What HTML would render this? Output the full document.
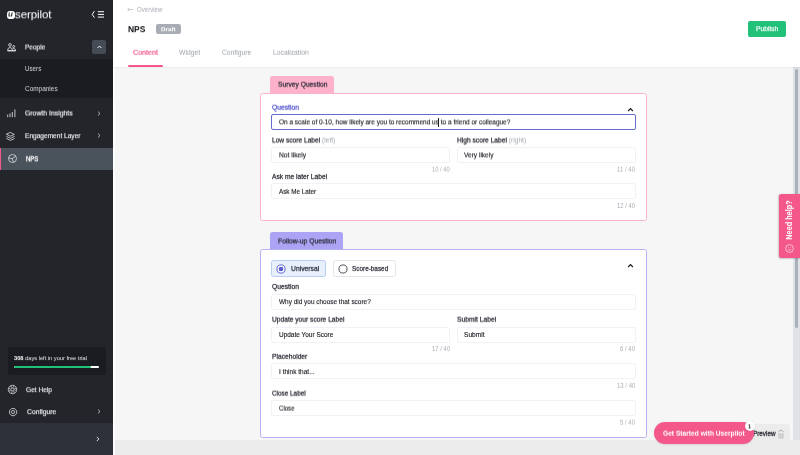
<!DOCTYPE html>
<html lang="en">
<head>
<meta charset="utf-8">
<title>NPS - Userpilot</title>
<style>
*{box-sizing:border-box;margin:0;padding:0}
html,body{width:800px;height:455px;overflow:hidden;background:#f6f6f6;font-family:"Liberation Sans",sans-serif;color:#2b2d38}
#app{position:absolute;left:0;top:0;width:800px;height:455px;overflow:hidden;will-change:transform}
.s{display:inline-block;transform-origin:0 50%}
.t{position:absolute;white-space:nowrap;line-height:10px;height:10px;transform-origin:0 50%}
/* sidebar */
#side{position:absolute;left:0;top:0;width:113px;height:455px;background:#23252b;color:#fff}
#side .sub{position:absolute;left:0;top:59px;width:113px;height:39px;background:#1a1c22}
#side .act{position:absolute;left:0;top:148px;width:113px;height:22px;background:#4a525b;border-left:1.3px solid #f4578a}
#side .bot{position:absolute;left:0;top:423px;width:113px;height:32px;background:#2d323a}
#side .trial{position:absolute;left:7.5px;top:346.5px;width:98px;height:28px;background:#1a1c22;border-radius:2.5px}
#side .chev{position:absolute;left:92px;top:40px;width:14px;height:14px;background:#464c55;border-radius:2px}
.nav{margin-top:0.5px;font-size:7.3px;font-weight:normal;-webkit-text-stroke:0.17px currentColor;color:#e9eaed}
.navs{margin-top:0.45px;font-size:7.2px;color:#d4d6da}
svg{position:absolute;overflow:visible}
/* header */
#head{position:absolute;left:113px;top:0;width:687px;height:67px;background:#fff;box-shadow:0 0.5px 1.5px rgba(0,0,0,.12)}
.tab{font-size:7.3px;color:#9a9fa8}
/* cards */
.card{position:absolute;left:260px;width:387px;background:#fff;border-radius:2.5px;border:1px solid}
.ctab{position:absolute;left:270px;height:17px;border-radius:2.5px 2.5px 0 0}
.inp{position:absolute;height:16px;border:1px solid #f1f2f6;border-radius:2px;background:#fff}
.lbl{margin-top:0.2px;font-size:7.3px;color:#292b34;font-weight:normal;-webkit-text-stroke:0.25px currentColor}
.lbl i{font-style:normal;font-weight:normal;color:#a3a8b0;-webkit-text-stroke:0}
.val{margin-top:0.4px;font-size:7px;color:#17181f;-webkit-text-stroke:0.12px currentColor}
.cnt{margin-top:0.5px;font-size:6.3px;color:#a9aeb5;text-align:right}
/*FIT*/
#logo-u{top:9px!important;margin-top:0!important;transform:translate3d(0,0.50px,0) rotate(0.0001deg)}#logo-u .s{transform:scaleX(1.000)}
#logo{top:9px!important;margin-top:0!important;transform:translate3d(0,0.30px,0) rotate(0.0001deg)}#logo .s{transform:scaleX(1.022)}
#n-people{top:42px!important;margin-top:0!important;transform:translate3d(0,0.50px,0) rotate(0.0001deg)}#n-people .s{transform:scaleX(0.893)}
#n-users{top:63px!important;margin-top:0!important;transform:translate3d(0,0.95px,0) rotate(0.0001deg)}#n-users .s{transform:scaleX(0.868)}
#n-comp{top:84px!important;margin-top:0!important;transform:translate3d(0,0.05px,0) rotate(0.0001deg)}#n-comp .s{transform:scaleX(0.897)}
#n-growth{top:108px!important;margin-top:0!important;transform:translate3d(0,0.50px,0) rotate(0.0001deg)}#n-growth .s{transform:scaleX(0.939)}
#n-eng{top:131px!important;margin-top:0!important;transform:translate3d(0,0.20px,0) rotate(0.0001deg)}#n-eng .s{transform:scaleX(0.900)}
#n-nps{top:154px!important;margin-top:0!important;transform:translate3d(0,0.30px,0) rotate(0.0001deg)}#n-nps .s{transform:scaleX(0.826)}
#trial{top:353px!important;margin-top:0!important;transform:translate3d(0,0.10px,0) rotate(0.0001deg)}#trial .s{transform:scaleX(0.919)}
#n-help{top:385px!important;margin-top:0!important;transform:translate3d(0,0.20px,0) rotate(0.0001deg)}#n-help .s{transform:scaleX(0.903)}
#n-conf{top:407px!important;margin-top:0!important;transform:translate3d(0,0.20px,0) rotate(0.0001deg)}#n-conf .s{transform:scaleX(0.926)}
#h-over{top:4px!important;margin-top:0!important;transform:translate3d(0,0.90px,0) rotate(0.0001deg)}#h-over .s{transform:scaleX(0.964)}
#h-nps{top:24px!important;margin-top:0!important;transform:translate3d(0,0.20px,0) rotate(0.0001deg)}#h-nps .s{transform:scaleX(1.010)}
#h-draft{top:24px!important;margin-top:0!important;transform:translate3d(0,0.20px,0) rotate(0.0001deg)}#h-draft .s{transform:scaleX(1.042)}
#tb1{top:47px!important;margin-top:0!important;transform:translate3d(0,0.80px,0) rotate(0.0001deg)}#tb1 .s{transform:scaleX(0.978)}
#tb2{top:47px!important;margin-top:0!important;transform:translate3d(0,0.80px,0) rotate(0.0001deg)}#tb2 .s{transform:scaleX(0.933)}
#tb3{top:47px!important;margin-top:0!important;transform:translate3d(0,0.80px,0) rotate(0.0001deg)}#tb3 .s{transform:scaleX(0.923)}
#tb4{top:47px!important;margin-top:0!important;transform:translate3d(0,0.80px,0) rotate(0.0001deg)}#tb4 .s{transform:scaleX(0.929)}
#h-pub{top:24px!important;margin-top:0!important;transform:translate3d(0,0.20px,0) rotate(0.0001deg)}#h-pub .s{transform:scaleX(0.942)}
#c1t{top:79px!important;margin-top:0!important;transform:translate3d(0,0.70px,0) rotate(0.0001deg)}#c1t .s{transform:scaleX(0.917)}
#c1q{top:102px!important;margin-top:0!important;transform:translate3d(0,0.70px,0) rotate(0.0001deg)}#c1q .s{transform:scaleX(0.924)}
#c1qv{top:117px!important;margin-top:0!important;transform:translate3d(0,0.40px,0) rotate(0.0001deg)}#c1qv .s{transform:scaleX(0.926)}
#c1l1{top:135px!important;margin-top:0!important;transform:translate3d(0,0.50px,0) rotate(0.0001deg)}#c1l1 .s{transform:scaleX(0.907)}
#c1l2{top:135px!important;margin-top:0!important;transform:translate3d(0,0.50px,0) rotate(0.0001deg)}#c1l2 .s{transform:scaleX(0.912)}
#c1v1{top:150px!important;margin-top:0!important;transform:translate3d(0,0.40px,0) rotate(0.0001deg)}#c1v1 .s{transform:scaleX(0.950)}
#c1v2{top:150px!important;margin-top:0!important;transform:translate3d(0,0.40px,0) rotate(0.0001deg)}#c1v2 .s{transform:scaleX(0.936)}
#c1c1{top:164px!important;margin-top:0!important;transform:translate3d(0,0.70px,0) rotate(0.0001deg)}#c1c1 .s{transform:scaleX(0.924)}
#c1c2{top:164px!important;margin-top:0!important;transform:translate3d(0,0.70px,0) rotate(0.0001deg)}#c1c2 .s{transform:scaleX(0.958)}
#c1l3{top:171px!important;margin-top:0!important;transform:translate3d(0,0.90px,0) rotate(0.0001deg)}#c1l3 .s{transform:scaleX(0.913)}
#c1v3{top:186px!important;margin-top:0!important;transform:translate3d(0,0.90px,0) rotate(0.0001deg)}#c1v3 .s{transform:scaleX(0.902)}
#c1c3{top:201px!important;margin-top:0!important;transform:translate3d(0,0.00px,0) rotate(0.0001deg)}#c1c3 .s{transform:scaleX(0.934)}
#c2t{top:236px!important;margin-top:0!important;transform:translate3d(0,0.40px,0) rotate(0.0001deg)}#c2t .s{transform:scaleX(0.926)}
#c2r1{top:263px!important;margin-top:0!important;transform:translate3d(0,0.90px,0) rotate(0.0001deg)}#c2r1 .s{transform:scaleX(0.927)}
#c2r2{top:263px!important;margin-top:0!important;transform:translate3d(0,0.90px,0) rotate(0.0001deg)}#c2r2 .s{transform:scaleX(0.875)}
#c2l1{top:281px!important;margin-top:0!important;transform:translate3d(0,0.90px,0) rotate(0.0001deg)}#c2l1 .s{transform:scaleX(0.924)}
#c2v1{top:297px!important;margin-top:0!important;transform:translate3d(0,0.10px,0) rotate(0.0001deg)}#c2v1 .s{transform:scaleX(0.921)}
#c2l2{top:314px!important;margin-top:0!important;transform:translate3d(0,0.70px,0) rotate(0.0001deg)}#c2l2 .s{transform:scaleX(0.911)}
#c2l3{top:314px!important;margin-top:0!important;transform:translate3d(0,0.70px,0) rotate(0.0001deg)}#c2l3 .s{transform:scaleX(0.920)}
#c2v2{top:330px!important;margin-top:0!important;transform:translate3d(0,0.00px,0) rotate(0.0001deg)}#c2v2 .s{transform:scaleX(0.924)}
#c2v3{top:330px!important;margin-top:0!important;transform:translate3d(0,0.00px,0) rotate(0.0001deg)}#c2v3 .s{transform:scaleX(0.941)}
#c2c1{top:344px!important;margin-top:0!important;transform:translate3d(0,0.10px,0) rotate(0.0001deg)}#c2c1 .s{transform:scaleX(0.945)}
#c2c2{top:344px!important;margin-top:0!important;transform:translate3d(0,0.10px,0) rotate(0.0001deg)}#c2c2 .s{transform:scaleX(0.951)}
#c2l4{top:351px!important;margin-top:0!important;transform:translate3d(0,0.80px,0) rotate(0.0001deg)}#c2l4 .s{transform:scaleX(0.916)}
#c2v4{top:367px!important;margin-top:0!important;transform:translate3d(0,0.10px,0) rotate(0.0001deg)}#c2v4 .s{transform:scaleX(0.933)}
#c2c3{top:380px!important;margin-top:0!important;transform:translate3d(0,0.90px,0) rotate(0.0001deg)}#c2c3 .s{transform:scaleX(0.950)}
#c2l5{top:388px!important;margin-top:0!important;transform:translate3d(0,0.60px,0) rotate(0.0001deg)}#c2l5 .s{transform:scaleX(0.874)}
#c2v5{top:403px!important;margin-top:0!important;transform:translate3d(0,0.60px,0) rotate(0.0001deg)}#c2v5 .s{transform:scaleX(0.866)}
#c2c4{top:417px!important;margin-top:0!important;transform:translate3d(0,0.70px,0) rotate(0.0001deg)}#c2c4 .s{transform:scaleX(0.951)}
#prev{top:428px!important;margin-top:0!important;transform:translate3d(0,0.90px,0) rotate(0.0001deg)}#prev .s{transform:scaleX(0.918)}
#gs{top:428px!important;margin-top:0!important;transform:translate3d(0,0.70px,0) rotate(0.0001deg)}#gs .s{transform:scaleX(0.886)}
#gsb{top:421px!important;margin-top:0!important;transform:translate3d(0,0.40px,0) rotate(0.0001deg)}#gsb .s{transform:scaleX(1.000)}
/*ENDFIT*/
</style>
</head>
<body>
<div id="app">
<!-- main bottom bar + scrollbar -->
<div style="position:absolute;left:113px;top:440.2px;width:687px;height:15px;background:#ececec"></div>
<div style="position:absolute;left:793.3px;top:67px;width:7px;height:373.2px;background:#dfe3e7"></div>
<div style="position:absolute;left:795px;top:68.5px;width:3.3px;height:259px;background:#a9b0b8;border-radius:2px"></div>

<div style="position:absolute;left:113px;top:0;width:2.2px;height:455px;background:#fdfdfd"></div>
<!-- ============ SIDEBAR ============ -->
<div id="side">
  <div class="sub"></div>
  <div class="act"></div>
  <div class="bot"></div>
  <div class="trial"></div>
  <div class="chev"></div>
  <!-- logo -->
  <div style="position:absolute;left:6.8px;top:10.6px;width:7.8px;height:8px;background:#fff;border-radius:2.9px"></div>
  <div class="t" id="logo-u" style="left:8.3px;top:9.5px;font-size:8px;font-weight:bold;font-style:italic;color:#23252b"><span class="s">u</span></div>
  <div class="t" id="logo" style="left:14.6px;top:9.3px;font-size:11.3px;color:#fff;letter-spacing:-0.1px"><span class="s">serpilot</span></div>
  <!-- collapse icon -->
  <svg style="left:91px;top:10px" width="14" height="9" viewBox="0 0 14 9"><path d="M3.4 1.2 L1.2 4.4 L3.4 7.6" fill="none" stroke="#fff" stroke-width="1"/><path d="M6.8 1.7H13 M6.8 4.4H13 M6.8 7.1H13" stroke="#fff" stroke-width="1"/></svg>
  <!-- chevron up in People -->
  <svg style="left:96.5px;top:45.3px" width="5" height="4" viewBox="0 0 5 4"><path d="M0.6 3 L2.5 1 L4.4 3" fill="none" stroke="#fff" stroke-width="0.9"/></svg>
  <!-- People icon -->
  <svg style="left:6.5px;top:42.5px" width="9" height="9" viewBox="0 0 9 9"><g fill="none" stroke="#eceef0" stroke-width="0.8" stroke-linejoin="round"><circle cx="3" cy="1.9" r="1.35"/><path d="M0.6 7.7Q0.6 4.5 3 4.5Q5.4 4.5 5.4 7.7Z"/><circle cx="6.7" cy="3.5" r="1"/><path d="M5.4 7.7H8.6Q8.6 5.5 6.8 5.5Q6 5.5 5.5 6"/><path d="M0.6 7.8H8.6" stroke-width="0.9"/></g></svg>
  <div class="t nav" id="n-people" style="left:24.7px;top:42px"><span class="s">People</span></div>
  <div class="t navs" id="n-users" style="left:24.7px;top:63.5px"><span class="s">Users</span></div>
  <div class="t navs" id="n-comp" style="left:24.7px;top:83.6px"><span class="s">Companies</span></div>
  <!-- growth icon -->
  <svg style="left:6.5px;top:109px" width="9" height="9" viewBox="0 0 9 9"><path d="M0.7 8.2V5.6 M3 8.2V4.4 M5.3 8.2V3 M7.9 8.2V0.4" stroke="#eceef0" stroke-width="0.8" fill="none"/></svg>
  <div class="t nav" id="n-growth" style="left:24.7px;top:108px"><span class="s">Growth Insights</span></div>
  <svg style="left:97px;top:110.5px" width="4" height="5" viewBox="0 0 4 5"><path d="M1 0.6 L3 2.5 L1 4.4" fill="none" stroke="#d6d8dc" stroke-width="0.75"/></svg>
  <!-- layers icon -->
  <svg style="left:6.4px;top:131.5px" width="9" height="9" viewBox="0 0 9 9"><g fill="none" stroke="#eceef0" stroke-width="0.75" stroke-linejoin="round" stroke-linecap="round"><path d="M4.5 0.6 L8.3 2.4 L4.5 4.2 L0.7 2.4Z"/><path d="M0.7 4.5 L4.5 6.3 L8.3 4.5"/><path d="M0.7 6.6 L4.5 8.4 L8.3 6.6"/></g></svg>
  <div class="t nav" id="n-eng" style="left:24.7px;top:130.7px"><span class="s">Engagement Layer</span></div>
  <svg style="left:97px;top:133.2px" width="4" height="5" viewBox="0 0 4 5"><path d="M1 0.6 L3 2.5 L1 4.4" fill="none" stroke="#d6d8dc" stroke-width="0.75"/></svg>
  <!-- NPS icon -->
  <svg style="left:8px;top:154.3px" width="9" height="9" viewBox="0 0 9 9"><g fill="none" stroke="#eceef0" stroke-width="0.7"><circle cx="4.5" cy="4.5" r="4"/><path d="M0.6 3.9 L4.1 4.7 L7.7 2.2 M4.1 4.7 L5.6 8.3"/></g></svg>
  <div class="t nav" id="n-nps" style="left:25.8px;top:153.8px;color:#fff;-webkit-text-stroke:0.3px #fff"><span class="s">NPS</span></div>
  <!-- trial -->
  <div class="t" id="trial" style="left:14px;top:353.1px;font-size:6.2px;color:#e8e9ec"><span class="s"><b style="color:#fff">308</b> days left in your free trial</span></div>
  <div style="position:absolute;left:14px;top:366px;width:85px;height:2.2px;background:#fff;border-radius:1px"></div>
  <div style="position:absolute;left:14px;top:366px;width:76.7px;height:2.2px;background:#21c17a;border-radius:1px"></div>
  <!-- get help -->
  <svg style="left:8.05px;top:385px" width="9" height="9" viewBox="0 0 9 9"><g fill="none" stroke="#eceef0" stroke-width="0.7"><circle cx="4.5" cy="4.5" r="4.25"/><circle cx="4.5" cy="4.5" r="1.5"/><circle cx="4.5" cy="4.5" r="2.9" stroke-width="2.1" stroke-dasharray="1.2 1.08" opacity="0.5"/></g></svg>
  <div class="t nav" id="n-help" style="left:26.2px;top:384.7px"><span class="s">Get Help</span></div>
  <!-- configure -->
  <svg style="left:8.9px;top:407.8px" width="8.2" height="8.2" viewBox="0 0 9 9"><g fill="none" stroke="#eceef0" stroke-width="0.8"><path d="M2.9 0.6H6.1L8.4 2.9V6.1L6.1 8.4H2.9L0.6 6.1V2.9Z" stroke-linejoin="round"/><circle cx="4.5" cy="4.5" r="1.9" stroke-width="0.7"/><circle cx="4.5" cy="4.5" r="0.55" fill="#eceef0" stroke="none" opacity="0.7"/></g></svg>
  <div class="t nav" id="n-conf" style="left:26.7px;top:406.7px"><span class="s">Configure</span></div>
  <svg style="left:97px;top:409.2px" width="4" height="5" viewBox="0 0 4 5"><path d="M1 0.6 L3 2.5 L1 4.4" fill="none" stroke="#d6d8dc" stroke-width="0.75"/></svg>
  <svg style="left:96px;top:435.9px" width="4" height="6" viewBox="0 0 4 6"><path d="M0.8 0.9 L2.9 3 L0.8 5.1" fill="none" stroke="#eee" stroke-width="0.9"/></svg>
</div>

<!-- ============ HEADER ============ -->
<div id="head"></div>
<svg style="left:127.3px;top:7.1px" width="7" height="5" viewBox="0 0 7 5"><path d="M6.4 2.5H0.8 M2.6 0.7L0.8 2.5L2.6 4.3" fill="none" stroke="#a7abb3" stroke-width="0.6"/></svg>
<div class="t" id="h-over" style="left:137.2px;top:4.9px;font-size:6.3px;color:#a7abb3"><span class="s">Overview</span></div>
<div class="t" id="h-nps" style="left:127.8px;top:24.2px;font-size:8.4px;font-weight:bold;color:#0b0c10"><span class="s">NPS</span></div>
<div style="position:absolute;left:155.6px;top:24.2px;width:25.6px;height:10px;background:#a8adb5;border-radius:2.2px"></div>
<div class="t" id="h-draft" style="left:161.2px;top:24.2px;font-size:6px;font-weight:bold;color:#fff"><span class="s">Draft</span></div>
<div class="t tab" id="tb1" style="left:132.8px;top:47.8px;color:#f4578a;-webkit-text-stroke:0.2px #f4578a"><span class="s">Content</span></div>
<div class="t tab" id="tb2" style="left:179px;top:47.8px"><span class="s">Widget</span></div>
<div class="t tab" id="tb3" style="left:221.6px;top:47.8px"><span class="s">Configure</span></div>
<div class="t tab" id="tb4" style="left:272.5px;top:47.8px"><span class="s">Localization</span></div>
<div style="position:absolute;left:127.5px;top:65px;width:35.5px;height:2px;background:#f4578a;border-radius:1px"></div>
<div style="position:absolute;left:748px;top:21px;width:38px;height:16px;background:#21c17a;border-radius:2px"></div>
<div class="t" id="h-pub" style="left:755.8px;top:24.2px;font-size:7.2px;-webkit-text-stroke:0.2px #fff;color:#fff"><span class="s">Publish</span></div>

<!-- ============ CARD 1 ============ -->
<div class="ctab" style="top:76px;width:64.2px;height:17.5px;background:#feb1cb"></div>
<div class="t lbl" id="c1t" style="left:277.5px;top:79.5px;color:#2b2d38"><span class="s">Survey Question</span></div>
<div class="card" style="top:93px;height:128.2px;border-color:#fdb2cb"></div>
<div class="t lbl" id="c1q" style="left:271.7px;top:102.5px;color:#4f51cd"><span class="s">Question</span></div>
<svg style="left:626.8px;top:107px" width="7" height="5" viewBox="0 0 7 5"><path d="M1.15 4 L3.5 1.5 L5.85 4" fill="none" stroke="#17181e" stroke-width="1.15"/></svg>
<div class="inp" style="left:271px;top:114px;width:364.5px;height:15.5px;border:1.2px solid #676cd4"></div>
<div class="t val" id="c1qv" style="left:278.7px;top:117px"><span class="s">On a scale of 0-10, how likely are you to recommend us to a friend or colleague?</span></div>
<div style="position:absolute;left:438.4px;top:117.5px;width:0.6px;height:9.6px;background:#222"></div>
<div class="t lbl" id="c1l1" style="left:271.7px;top:135.3px"><span class="s">Low score Label <i>(left)</i></span></div>
<div class="t lbl" id="c1l2" style="left:457px;top:135.3px"><span class="s">High score Label <i>(right)</i></span></div>
<div class="inp" style="left:271px;top:147px;width:178.6px"></div>
<div class="inp" style="left:457px;top:147px;width:178.6px"></div>
<div class="t val" id="c1v1" style="left:278.7px;top:150px"><span class="s">Not likely</span></div>
<div class="t val" id="c1v2" style="left:463.7px;top:150px"><span class="s">Very likely</span></div>
<div class="t cnt" id="c1c1" style="left:431.7px;top:164.2px"><span class="s">10 / 40</span></div>
<div class="t cnt" id="c1c2" style="left:617px;top:164.2px"><span class="s">11 / 40</span></div>
<div class="t lbl" id="c1l3" style="left:271.7px;top:171.7px"><span class="s">Ask me later Label</span></div>
<div class="inp" style="left:271px;top:183.3px;width:364.5px"></div>
<div class="t val" id="c1v3" style="left:278.7px;top:186.5px"><span class="s">Ask Me Later</span></div>
<div class="t cnt" id="c1c3" style="left:617px;top:200.5px"><span class="s">12 / 40</span></div>

<!-- ============ CARD 2 ============ -->
<div class="ctab" style="top:232.3px;width:73px;background:#aba3f4"></div>
<div class="t lbl" id="c2t" style="left:277.5px;top:236.2px;color:#2b2d38"><span class="s">Follow-up Question</span></div>
<div class="card" style="top:249px;height:189.2px;border-color:#b7b0f5"></div>
<svg style="left:626.8px;top:263.4px" width="7" height="5" viewBox="0 0 7 5"><path d="M1.15 4 L3.5 1.5 L5.85 4" fill="none" stroke="#17181e" stroke-width="1.15"/></svg>
<div style="position:absolute;left:271.2px;top:260.4px;width:54.5px;height:16.3px;background:#e8effd;border:1px solid #bacdf5;border-radius:2.5px"></div>
<div style="position:absolute;left:333.2px;top:260.4px;width:63px;height:16.3px;background:#fff;border:1px solid #e4e5ea;border-radius:2.5px"></div>
<svg style="left:275.7px;top:263.7px" width="10" height="10" viewBox="0 0 10 10"><circle cx="5" cy="5" r="4.1" fill="#fff" stroke="#6468d4" stroke-width="1"/><circle cx="5" cy="5" r="2.3" fill="#5b5fd0"/></svg>
<svg style="left:337.5px;top:263.7px" width="10" height="10" viewBox="0 0 10 10"><circle cx="5" cy="5" r="4.05" fill="#fff" stroke="#4a4c55" stroke-width="0.95"/></svg>
<div class="t lbl" id="c2r1" style="left:290.5px;top:263.7px;color:#2b2d38"><span class="s">Universal</span></div>
<div class="t lbl" id="c2r2" style="left:352px;top:263.7px;color:#2b2d38"><span class="s">Score-based</span></div>
<div class="t lbl" id="c2l1" style="left:271.7px;top:281.7px"><span class="s">Question</span></div>
<div class="inp" style="left:271px;top:293.6px;width:364.5px"></div>
<div class="t val" id="c2v1" style="left:278.7px;top:296.7px"><span class="s">Why did you choose that score?</span></div>
<div class="t lbl" id="c2l2" style="left:271.7px;top:314.5px"><span class="s">Update your score Label</span></div>
<div class="t lbl" id="c2l3" style="left:457px;top:314.5px"><span class="s">Submit Label</span></div>
<div class="inp" style="left:271px;top:326.7px;width:178.6px"></div>
<div class="inp" style="left:457px;top:326.7px;width:178.6px"></div>
<div class="t val" id="c2v2" style="left:278.7px;top:329.6px"><span class="s">Update Your Score</span></div>
<div class="t val" id="c2v3" style="left:463.9px;top:329.6px"><span class="s">Submit</span></div>
<div class="t cnt" id="c2c1" style="left:431.5px;top:343.6px"><span class="s">17 / 40</span></div>
<div class="t cnt" id="c2c2" style="left:620px;top:343.6px"><span class="s">6 / 40</span></div>
<div class="t lbl" id="c2l4" style="left:271.7px;top:351.6px"><span class="s">Placeholder</span></div>
<div class="inp" style="left:271px;top:363.3px;width:364.5px"></div>
<div class="t val" id="c2v4" style="left:278.7px;top:366.7px"><span class="s">I think that...</span></div>
<div class="t cnt" id="c2c3" style="left:616.7px;top:380.4px"><span class="s">13 / 40</span></div>
<div class="t lbl" id="c2l5" style="left:271.7px;top:388.4px"><span class="s">Close Label</span></div>
<div class="inp" style="left:271px;top:400.3px;width:364.5px"></div>
<div class="t val" id="c2v5" style="left:278.7px;top:403.2px"><span class="s">Close</span></div>
<div class="t cnt" id="c2c4" style="left:620px;top:417.2px"><span class="s">5 / 40</span></div>

<!-- ============ FLOATING ============ -->
<div style="position:absolute;left:779px;top:193.8px;width:21px;height:64.5px;background:#f4578a;border-radius:2.5px 0 0 2.5px;box-shadow:-0.5px 0.5px 1.5px rgba(0,0,0,.18)"></div>
<div id="needhelp" style="position:absolute;left:789.8px;top:220px;white-space:nowrap;font-size:8.2px;font-weight:bold;color:#fff;line-height:10px;transform:translate(-50%,-50%) rotate(-90deg) scaleX(0.89)">Need help?</div>
<svg style="left:785.2px;top:243.6px" width="9" height="9" viewBox="0 0 9 9"><g fill="none" stroke="#fff" stroke-width="0.6"><circle cx="4.5" cy="4.5" r="3.9"/><path d="M2.9 5.3Q4.5 6.9 6.1 5.3"/></g><circle cx="3.3" cy="3.6" r="0.45" fill="#fff"/><circle cx="5.7" cy="3.6" r="0.45" fill="#fff"/></svg>

<div style="position:absolute;left:740px;top:424px;width:49.7px;height:17px;background:#ececec;border-radius:0 4px 0 0"></div>
<div class="t" id="prev" style="left:752.8px;top:428.9px;font-size:6.9px;-webkit-text-stroke:0.3px currentColor;color:#2b2d35"><span class="s">Preview</span></div>
<svg style="left:777.6px;top:428.5px" width="6" height="10" viewBox="0 0 6 10"><path d="M0.5 2.9L3 0.9L5.5 2.9" fill="none" stroke="#777b82" stroke-width="0.6"/><path d="M1.05 4.2V9.7 M2.95 4.2V9.7 M4.85 4.2V9.7" stroke="#80848b" stroke-width="0.5"/></svg>
<div style="position:absolute;left:653.7px;top:422.3px;width:100.3px;height:22.2px;background:#f4578a;border-radius:11.3px;box-shadow:0 0.5px 2px rgba(0,0,0,.15)"></div>
<div class="t" id="gs" style="left:662.7px;top:428.7px;font-size:7.5px;font-weight:bold;color:#fff"><span class="s">Get Started with Userpilot</span></div>
<div style="position:absolute;left:744.8px;top:421px;width:10px;height:10px;background:#fff;border-radius:50%;box-shadow:0 0 1px rgba(0,0,0,.2)"></div>
<div class="t" id="gsb" style="left:748.4px;top:421.4px;font-size:5.6px;font-weight:bold;color:#222"><span class="s">1</span></div>
</div>
</body>
</html>
